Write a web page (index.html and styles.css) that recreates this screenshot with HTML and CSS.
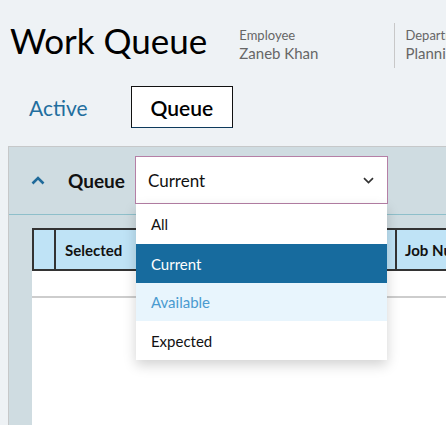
FILE: index.html
```html
<!DOCTYPE html>
<html lang="en">
<head>
  <meta charset="UTF-8" />
  <meta name="viewport" content="width=device-width, initial-scale=1.0"/>
  <title>Work Queue</title>
  <link rel="stylesheet" href="styles.css">
</head>
<body>
  <div class="header">
    <h1 class="title">Work Queue</h1>
    <div class="meta">
      <div class="meta-label">Employee</div>
      <div class="meta-value">Zaneb Khan</div>
    </div>
    <div class="meta meta-split">
      <div class="meta-label">Department</div>
      <div class="meta-value">Planning</div>
    </div>
  </div>

  <div class="tabs">
    <div class="tab">Active</div>
    <div class="tab tab-active">Queue</div>
  </div>

  <div class="panel">
    <div class="panel-head">
      <svg class="collapse" width="14" height="9" viewBox="0 0 14 9">
        <polyline points="1.5,7.5 7,2 12.5,7.5" fill="none" stroke="#1f6a9a" stroke-width="2.6"/>
      </svg>
      <span class="panel-title">Queue</span>
      <div class="select">
        <span class="select-value">Current</span>
        <svg class="select-arrow" width="11" height="7" viewBox="0 0 11 7">
          <polyline points="1,1.2 5.5,5.5 10,1.2" fill="none" stroke="#333" stroke-width="1.7"/>
        </svg>
        <ul class="dropdown">
          <li>All</li>
          <li class="is-selected">Current</li>
          <li class="is-hover">Available</li>
          <li>Expected</li>
        </ul>
      </div>
    </div>

    <div class="panel-body">
      <div class="grid">
        <div class="grid-head">
          <div class="cell cell-check"></div>
          <div class="cell cell-selected">Selected</div>
          <div class="cell cell-job">Job Number</div>
        </div>
        <div class="grid-row"></div>
        <div class="grid-rest"></div>
      </div>
    </div>
  </div>
</body>
</html>
```

FILE: styles.css
```css
* {
  box-sizing: border-box;
  margin: 0;
  padding: 0;
}

html, body {
  height: 100%;
}

body {
  background-color: #eef2f5;
  font-family: Lato, 'Noto Sans', sans-serif;
  color: #111;
  overflow: hidden;
  white-space: nowrap;
  display: flex;
  flex-direction: column;
}

.header {
  display: flex;
  align-items: flex-start;
  padding: 19px 0 0 10px;
  height: 86px;
}

.title {
  font-size: 35px;
  font-weight: 400;
  line-height: 42px;
  color: #000;
}

.meta {
  margin-left: 32px;
  padding-top: 8px;
  color: #666;
}

.meta-split {
  margin-left: 76px;
  margin-top: 4px;
  padding: 4px 0 0 10px;
  height: 45px;
  border-left: 1px solid #c8c8c8;
}

.meta-label {
  font-size: 13px;
  line-height: 16px;
}

.meta-value {
  font-size: 15px;
  line-height: 20px;
}

.tabs {
  display: flex;
  gap: 23px;
  padding-left: 9px;
  height: 42px;
}

.tab {
  display: flex;
  align-items: center;
  padding: 0 19px;
  font-size: 21px;
  color: #226e9e;
  border: 1px solid transparent;
}

.tab-active {
  color: #000;
  font-weight: 600;
  background-color: #fff;
  border-color: #111;
  border-bottom-color: #0d3a5c;
}

.panel {
  flex: 1;
  margin: 18px 0 0 8px;
  background-color: #cfdce1;
  border-top: 1px solid #c6c8c9;
  border-left: 1px solid #c6c8c9;
  display: flex;
  flex-direction: column;
}

.panel-head {
  display: flex;
  align-items: center;
  height: 68px;
  padding: 0 0 1px 22px;
  border-bottom: 1px solid #8ebfca;
}

.collapse {
  display: block;
}

.panel-title {
  margin-left: 23px;
  font-size: 19px;
  font-weight: 700;
  color: #111;
}

.select {
  position: relative;
  margin-left: 10px;
  width: 253px;
  height: 48px;
  background-color: #fff;
  border: 1px solid #b57fa6;
  display: flex;
  align-items: center;
  padding: 0 12px;
}

.select-value {
  flex: 1;
  font-size: 17px;
}

.select-arrow {
  display: block;
  margin-right: 1px;
}

.dropdown {
  position: absolute;
  top: 47px;
  left: 0;
  width: 251px;
  list-style: none;
  background-color: #fff;
  box-shadow: 0 5px 12px rgba(0, 0, 0, 0.18);
  z-index: 2;
}

.dropdown li {
  height: 39px;
  display: flex;
  align-items: center;
  padding-left: 15px;
  font-size: 15px;
  color: #111;
}

.dropdown li:first-child {
  height: 40px;
}

.dropdown .is-selected {
  background-color: #176b9e;
  color: #fff;
}

.dropdown .is-hover {
  height: 38px;
  background-color: #e8f5fd;
  color: #4a9bd0;
}

.panel-body {
  flex: 1;
  padding: 13px 0 0 23px;
  display: flex;
}

.grid {
  flex: 1;
  display: flex;
  flex-direction: column;
  background-color: #fff;
}

.grid-head {
  display: flex;
  height: 43px;
  background-color: #bfe3f6;
  border: 2px solid #333;
  border-right: none;
}

.cell {
  display: flex;
  align-items: center;
  font-size: 15px;
  font-weight: 700;
  color: #111;
}

.cell-check {
  width: 22px;
  border-right: 2px solid #333;
}

.cell-selected {
  width: 341px;
  padding-left: 9px;
  border-right: 2px solid #333;
}

.cell-job {
  padding-left: 8px;
}

.grid-row {
  height: 27px;
  border-bottom: 2px solid #cdcdcd;
}

.grid-rest {
  flex: 1;
}
```
